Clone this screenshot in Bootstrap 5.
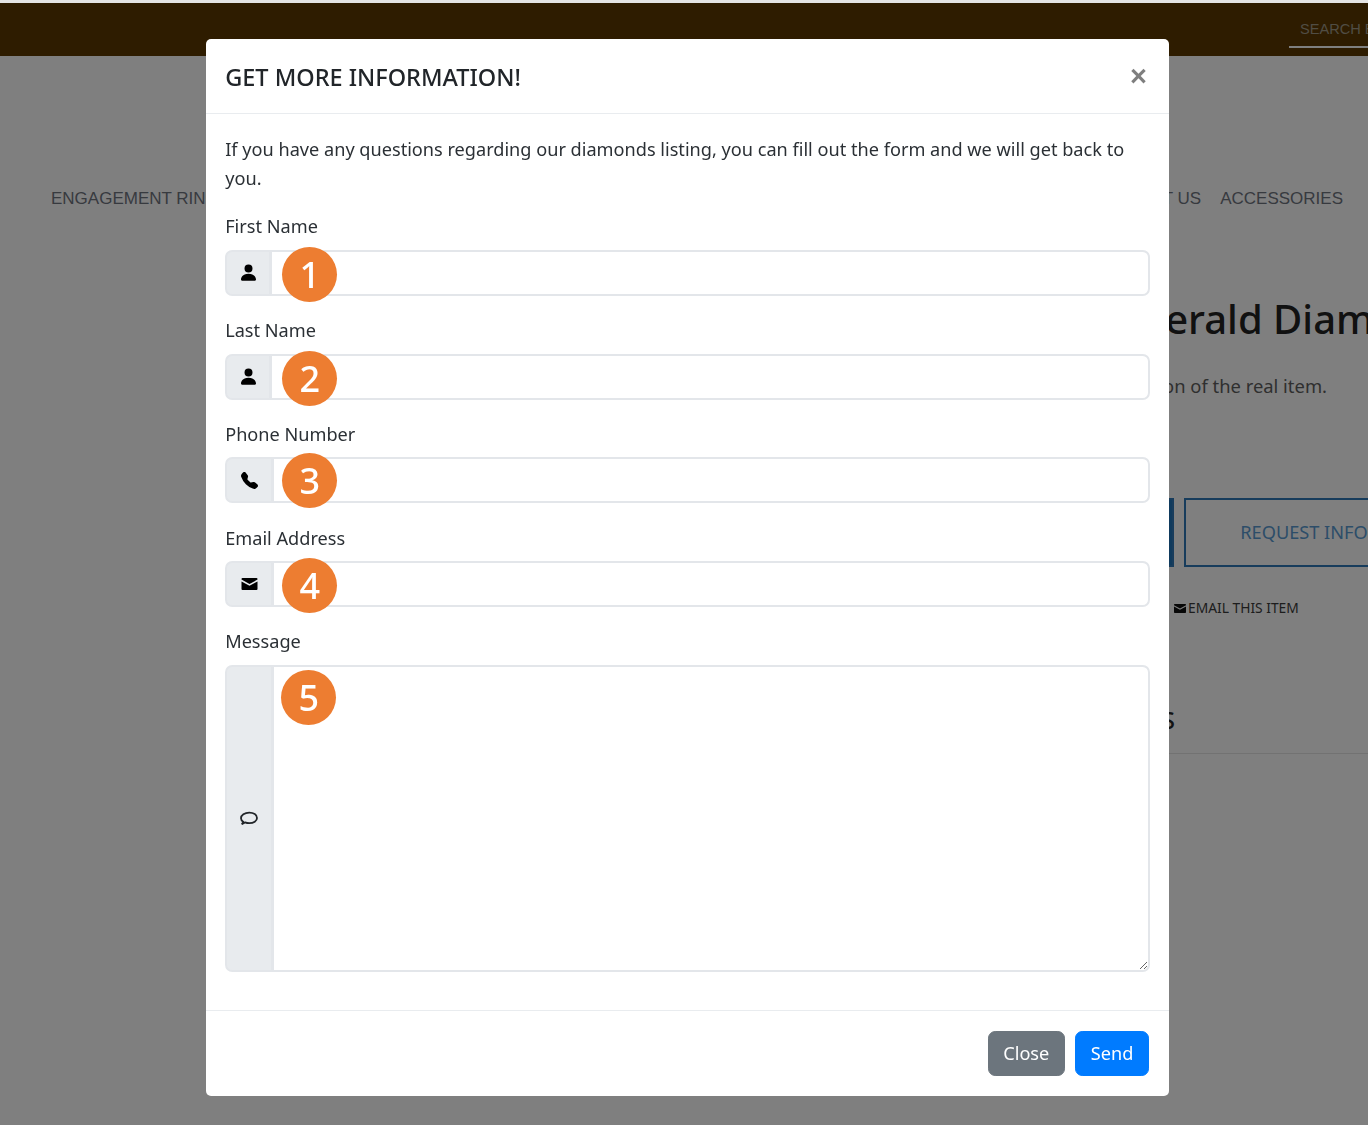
<!DOCTYPE html>
<html lang="en">
<head>
<meta charset="utf-8">
<title>Get more information</title>
<link href="https://cdn.jsdelivr.net/npm/bootstrap@5.3.0/dist/css/bootstrap.min.css" rel="stylesheet">
<style>
html{font-size:19.2px;overflow:hidden}
body{font-family:"Noto Sans","Open Sans",sans-serif;background:#fff;color:#212529;overflow:hidden;height:1125px;border-top:3px solid #e4e4e4}
.page-shell{width:1368px;overflow:hidden}
.top-strip{height:53px;background:#5c3800;padding-left:1289px}
.search-box{width:300px;height:45px;flex:none;border-bottom:2px solid #fff;font:14.6px/36px "Liberation Sans",sans-serif;color:#a09a88;padding:8px 0 0 11px;white-space:nowrap}
.main-nav{margin-top:131px;padding:0 25px 0 51px;font:17px/24px "Liberation Sans",sans-serif}
.main-nav a{color:#6f747e;text-decoration:none;white-space:nowrap}
.nav-end{column-gap:19px}
.hero{margin-left:720px;width:648px}
.hero-title{margin:84px 0 0;padding-left:385px;font-size:40px;line-height:48px;font-weight:500;color:#222;white-space:nowrap}
.hero-note{margin:29px 0 0;padding:0 41px 0 100px;font-size:18.4px;line-height:28px;color:#5e5e5e;white-space:nowrap;text-align:right}
.cta-row{margin-top:98px;height:69px;column-gap:10px}
.cta{flex:none;height:69px;display:flex;align-items:center;justify-content:center;border:2px solid #2f78b8;color:#5298d4;font-size:18.2px}
.cta-fill{width:454px;background:#1f74bb}
.cta-line{width:240px;background:transparent;color:#5a9bd2}
.mail-row{margin:31px 0 0 454px;font-size:13.8px;line-height:20px;color:#3a3a3a;white-space:nowrap}
.mail-row svg{width:12px;height:9px;fill:#111;margin-right:2px;vertical-align:0}
.sec-title{margin:86px 0 0;font-size:24px;line-height:32px;font-weight:500;color:#272727;padding-left:267px;white-space:nowrap}
.sec-rule{margin-top:17px;border-top:1px solid #e5e5e5}
.modal-backdrop{top:3px}
.info-dialog{max-width:none;width:963px;margin:39px 0 0 206px}
.info-dialog .modal-content{border:0;border-radius:5px}
.info-dialog .modal-header{border-bottom-color:#e9ecef;padding-top:20px;padding-bottom:18.4px}
.info-dialog .modal-footer{border-top-color:#e9ecef;padding:15px 15.4px 14.6px}
.info-dialog .modal-title{font-size:23.5px;line-height:36px;font-weight:500}
.x-glyph{margin:0 3px 2px auto;font:700 29px/24px "Liberation Sans",sans-serif;color:#000;opacity:.5;border:0;background:none;padding:0}
.info-dialog .modal-body{padding-top:21px}
.info-dialog p,.info-dialog label,.info-dialog .form-control{font-size:18.15px;color:#2b3035}
.info-dialog p{line-height:29px;margin-bottom:19px}
.info-dialog label{line-height:28.8px;margin-bottom:8.6px;display:block}
.field{margin-bottom:20.2px;position:relative}
.field-last{margin-bottom:19.2px}
.info-dialog .form-control{line-height:27.8px;border:2px solid #e3e6ea}
.field .input-group-text{color:#000;background:#e8ebee;border:2px solid #e3e6ea;padding:0 13.5px;line-height:27.8px}
.field svg{display:block;fill:#000}
.ic-person{width:15px;height:17px}
.ic-phone{width:17px;height:17px}
.ic-mail{width:17px;height:12px}
.field .ic-chat{width:18px;height:15px;fill:none;stroke:#212529;stroke-width:1.8}
.chat-cell.input-group-text{padding:0 13px}
.msg-area{height:307px}
.pin{position:absolute;left:57px;width:55px;height:55px;border-radius:50%;background:#ed7d31;color:#fff;font-size:36px;font-weight:500;line-height:55px;text-align:center;z-index:6}
.pin-a{top:35px}.pin-b{top:35px}.pin-c{top:33px}.pin-d{top:34px}.pin-e{top:42.5px;left:56px}
.btn-dim,.btn-go{font-size:18.15px;line-height:28.8px;color:#fff}
.btn-dim{background:#6c757d;border-color:#6c757d;margin-right:6px}
.btn-go{background:#007bff;border-color:#007bff}
</style>
</head>
<body>
<div class="page-shell">
  <div class="top-strip d-flex">
    <div class="search-box">SEARCH BY KEYWORD</div>
  </div>
  <nav class="main-nav d-flex justify-content-between">
    <div class="d-flex gap-4">
      <a href="#">ENGAGEMENT RINGS</a><a href="#">DIAMONDS</a><a href="#">WEDDING BANDS</a>
    </div>
    <div class="d-flex nav-end">
      <a href="#">CONTACT US</a><a href="#">ACCESSORIES</a>
    </div>
  </nav>
  <section class="hero">
    <h1 class="hero-title">Emerald Diamond</h1>
    <p class="hero-note">Image is a representation of the real item.</p>
    <div class="cta-row d-flex">
      <div class="cta cta-fill">ADD TO CART</div>
      <div class="cta cta-line">REQUEST INFO</div>
    </div>
    <div class="mail-row"><svg viewBox="0 2 16 12"><path d="M1 2h14a1 1 0 0 1 1 1v.6L8 8 0 3.600V3a1 1 0 0 1 1-1ZM0 5.400V13a1 1 0 0 0 1 1h14a1 1 0 0 0 1-1V5.400L8 9.800 0 5.400Z"/></svg>EMAIL THIS ITEM</div>
    <h2 class="sec-title">SPECIFICATIONS</h2>
    <div class="sec-rule"></div>
  </section>
</div>

<div class="modal-backdrop show"></div>
<div class="modal d-block" tabindex="-1" role="dialog">
  <div class="modal-dialog info-dialog">
    <div class="modal-content">
      <div class="modal-header">
        <h5 class="modal-title">GET MORE INFORMATION!</h5>
        <button type="button" class="x-glyph" aria-label="Close">&times;</button>
      </div>
      <div class="modal-body">
        <p>If you have any questions regarding our diamonds listing, you can fill out the form and we will get back to you.</p>
        <div class="field">
          <label for="f1">First Name</label>
          <div class="input-group">
            <span class="input-group-text"><svg class="ic-person" viewBox="2 1.500 12 13"><path d="M3 14.500s-1 0-1-1 1-4.500 6-4.500 6 3.500 6 4.500-1 1-1 1H3Zm5-6.500a3.200 3.200 0 1 0 0-6.400 3.200 3.200 0 0 0 0 6.400Z"/></svg></span>
            <input id="f1" class="form-control" type="text">
          </div>
          <span class="pin pin-a">1</span>
        </div>
        <div class="field">
          <label for="f2">Last Name</label>
          <div class="input-group">
            <span class="input-group-text"><svg class="ic-person" viewBox="2 1.500 12 13"><path d="M3 14.500s-1 0-1-1 1-4.500 6-4.500 6 3.500 6 4.500-1 1-1 1H3Zm5-6.500a3.200 3.200 0 1 0 0-6.400 3.200 3.200 0 0 0 0 6.400Z"/></svg></span>
            <input id="f2" class="form-control" type="text">
          </div>
          <span class="pin pin-b">2</span>
        </div>
        <div class="field">
          <label for="f3">Phone Number</label>
          <div class="input-group">
            <span class="input-group-text"><svg class="ic-phone" viewBox="0 0 16 16"><path d="M1.885.511a1.745 1.745 0 0 1 2.61.163L6.29 2.980c.329.423.445.974.315 1.494l-.547 2.190a.678.678 0 0 0 .178.643l2.457 2.457a.678.678 0 0 0 .644.178l2.189-.547a1.745 1.745 0 0 1 1.494.315l2.306 1.794c.829.645.905 1.870.163 2.611l-1.034 1.034c-.740.740-1.846 1.065-2.877.702a18.634 18.634 0 0 1-7.010-4.420 18.634 18.634 0 0 1-4.420-7.009c-.362-1.030-.037-2.137.703-2.877L1.885.511z"/></svg></span>
            <input id="f3" class="form-control" type="tel">
          </div>
          <span class="pin pin-c">3</span>
        </div>
        <div class="field">
          <label for="f4">Email Address</label>
          <div class="input-group">
            <span class="input-group-text"><svg class="ic-mail" viewBox="0 2 16 12"><path d="M1 2h14a1 1 0 0 1 1 1v.6L8 8 0 3.600V3a1 1 0 0 1 1-1ZM0 5.400V13a1 1 0 0 0 1 1h14a1 1 0 0 0 1-1V5.400L8 9.800 0 5.400Z"/></svg></span>
            <input id="f4" class="form-control" type="email">
          </div>
          <span class="pin pin-d">4</span>
        </div>
        <div class="field field-last">
          <label for="f5">Message</label>
          <div class="input-group">
            <span class="input-group-text chat-cell"><svg class="ic-chat" viewBox="0 0 18 15"><path d="M3.200 10.700C1.900 9.800 1 8.600 1 7.200 1 4.300 4.600 1.600 9.300 1.600c4.300 0 7.700 2.200 7.700 5.300 0 3-3.400 5.300-7.700 5.300-1.600 0-3-.3-4.300-.8L1.700 13.300c.7-.7 1.300-1.600 1.500-2.600Z"/></svg></span>
            <textarea id="f5" class="form-control msg-area"></textarea>
          </div>
          <span class="pin pin-e">5</span>
        </div>
      </div>
      <div class="modal-footer">
        <button type="button" class="btn btn-dim">Close</button>
        <button type="button" class="btn btn-go">Send</button>
      </div>
    </div>
  </div>
</div>
<script src="https://cdn.jsdelivr.net/npm/bootstrap@5.3.0/dist/js/bootstrap.bundle.min.js"></script>
</body>
</html>
